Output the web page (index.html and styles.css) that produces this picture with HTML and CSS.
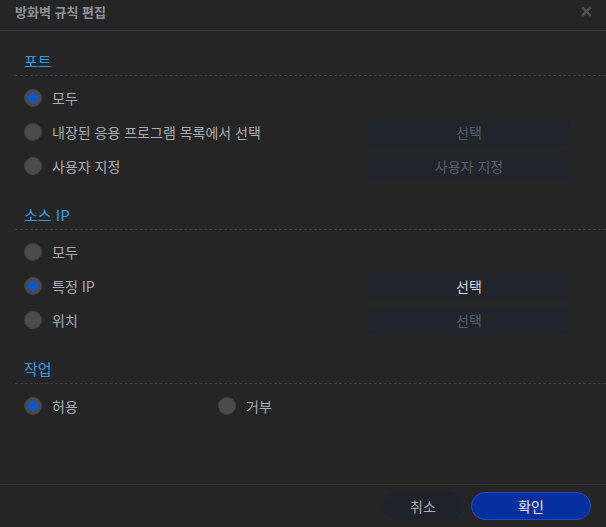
FILE: index.html
```html
<!DOCTYPE html>
<html lang="ko">
<head>
    <meta charset="UTF-8">
    <meta name="viewport" content="width=device-width, initial-scale=1.0">
    <title>방화벽 규칙 편집</title>
    <link rel="stylesheet" href="styles.css">
</head>
<body>
    <div class="dialog">
        <header class="dialog-head">
            <h1>방화벽 규칙 편집</h1>
            <span class="close">
                <svg width="11" height="11" viewBox="0 0 11 11"><path d="M1.2 1.2 L9.8 9.8 M9.8 1.2 L1.2 9.8" stroke="#4a5058" stroke-width="2.6"/></svg>
            </span>
        </header>

        <main class="dialog-body">
            <section class="group">
                <h2>포트</h2>
                <div class="row">
                    <label class="radio"><span class="dot on"></span>모두</label>
                </div>
                <div class="row">
                    <label class="radio"><span class="dot"></span>내장된 응용 프로그램 목록에서 선택</label>
                    <button class="pick" disabled>선택</button>
                </div>
                <div class="row">
                    <label class="radio"><span class="dot"></span>사용자 지정</label>
                    <button class="pick" disabled>사용자 지정</button>
                </div>
            </section>

            <section class="group">
                <h2>소스 IP</h2>
                <div class="row">
                    <label class="radio"><span class="dot"></span>모두</label>
                </div>
                <div class="row">
                    <label class="radio"><span class="dot on"></span>특정 IP</label>
                    <button class="pick">선택</button>
                </div>
                <div class="row">
                    <label class="radio"><span class="dot"></span>위치</label>
                    <button class="pick" disabled>선택</button>
                </div>
            </section>

            <section class="group">
                <h2>작업</h2>
                <div class="row">
                    <label class="radio half"><span class="dot on"></span>허용</label>
                    <label class="radio"><span class="dot"></span>거부</label>
                </div>
            </section>
        </main>

        <footer class="dialog-foot">
            <button class="btn cancel">취소</button>
            <button class="btn ok">확인</button>
        </footer>
    </div>
</body>
</html>
```

FILE: styles.css
```css
html, body {
    margin: 0;
    padding: 0;
    background: #252525;
}
body {
    font-family: "Noto Sans CJK KR", "Noto Sans", sans-serif;
    color: #a9adb2;
}
.dialog {
    width: 606px;
    height: 527px;
    display: flex;
    flex-direction: column;
}
.dialog-head {
    height: 31px;
    box-sizing: border-box;
    display: flex;
    justify-content: space-between;
    align-items: center;
    padding: 0 14px 7px 15px;
    border-bottom: 1px solid #30353b;
}
.dialog-head h1 {
    margin: 0;
    font-size: 13px;
    line-height: 16px;
    font-weight: bold;
    color: #8e9399;
}
.close {
    display: flex;
}
.dialog-body {
    flex: 1;
    padding: 17px 0 0 15px;
}
.group {
    margin-bottom: 19px;
}
.group h2 {
    margin: 0;
    padding: 0 0 0 9px;
    height: 27px;
    font-size: 15px;
    font-weight: normal;
    color: #2f9ee8;
    line-height: 26px;
    border-bottom: 1px dashed #3a3f46;
}
.group h2 + .row {
    margin-top: 5px;
}
.row {
    height: 34px;
    display: flex;
    align-items: center;
    padding-left: 9px;
}
.radio {
    display: flex;
    align-items: center;
    gap: 10px;
    font-size: 14px;
    color: #a9adb2;
    flex: 1;
}
.radio.half {
    flex: 0 0 194px;
}
.dot {
    width: 18px;
    height: 18px;
    border-radius: 50%;
    background: #4b4b4b;
    box-sizing: border-box;
    border: 1px solid #424242;
    display: flex;
    align-items: center;
    justify-content: center;
}
.dot.on::after {
    content: "";
    width: 10px;
    height: 10px;
    border-radius: 50%;
    background: #0a57c9;
}
.pick {
    width: 200px;
    height: 27px;
    margin-right: 37px;
    border: none;
    border-radius: 3px;
    background: #20242b;
    color: #d6dadf;
    font-family: inherit;
    font-size: 14px;
    padding: 0;
}
.pick:disabled {
    color: #5a5e65;
}
.dialog-foot {
    height: 43px;
    box-sizing: border-box;
    border-top: 1px solid #30353b;
    display: flex;
    justify-content: flex-end;
    align-items: center;
    gap: 8px;
    padding: 0 15px 0 0;
}
.btn {
    height: 28px;
    border-radius: 14px;
    font-family: inherit;
    font-size: 14px;
    padding: 0;
}
.cancel {
    width: 80px;
    background: #1f2329;
    border: none;
    color: #a9adb2;
}
.ok {
    width: 120px;
    background: #0630a0;
    border: 1px solid #1d4fc4;
    color: #e6e9ee;
}
```
